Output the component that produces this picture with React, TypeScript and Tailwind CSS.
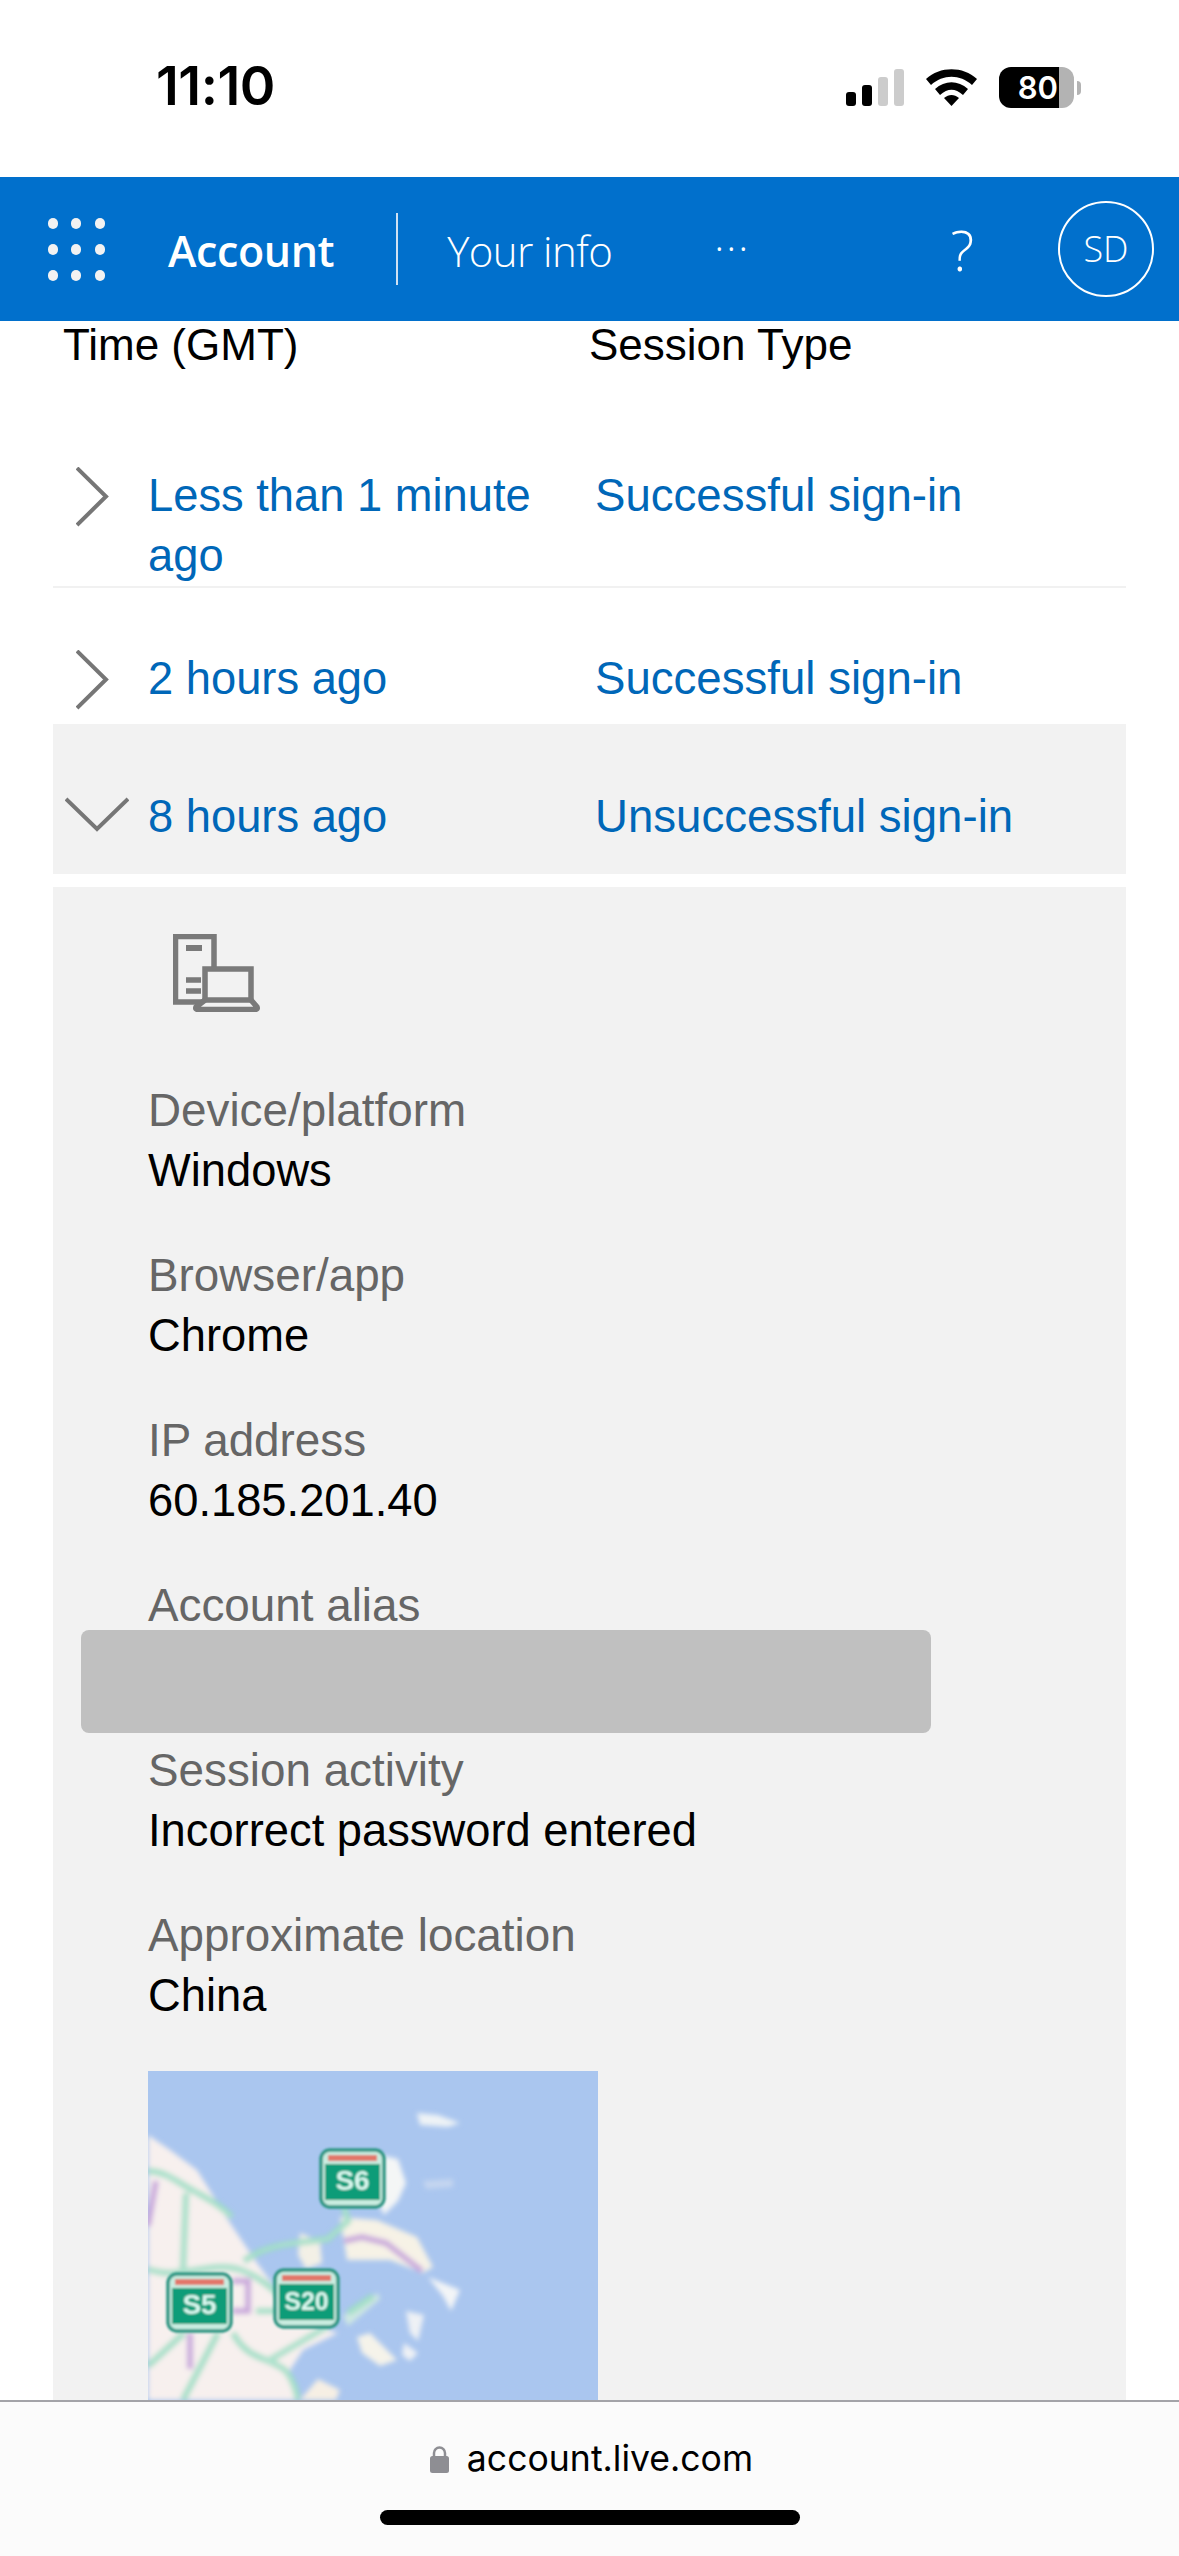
import React from "react";

type Detail = { label: string; value: string };

const details: Detail[] = [
  { label: "Device/platform", value: "Windows" },
  { label: "Browser/app", value: "Chrome" },
  { label: "IP address", value: "60.185.201.40" },
  { label: "Account alias", value: "" },
  { label: "Session activity", value: "Incorrect password entered" },
  { label: "Approximate location", value: "China" },
];

const greenRoads = [
  "M0 100 C18 100 30 112 46 120 C60 128 72 134 84 146",
  "M38 122 L35 200",
  "M0 198 C30 210 60 190 90 198 C110 204 125 218 140 232",
  "M96 190 C120 172 150 172 180 168 L200 150 L196 136",
  "M108 240 L150 240",
  "M0 295 L36 262",
  "M35 329 L70 262",
  "M85 262 C100 290 120 285 138 300 C146 310 148 320 150 329",
  "M120 290 L180 255",
  "M200 242 L225 225",
];

const purpleRoads = [
  "M8 110 L0 155",
  "M42 262 L42 298",
  "M84 210 H100 V240 H84",
  "M196 170 L214 166 L238 172 L274 200",
];

function Chevron({ open }: { open?: boolean }) {
  if (open) {
    return (
      <svg width="64" height="36" viewBox="0 0 64 36" fill="none" className="ml-[12px] mt-[10px]">
        <path d="M1 2 L32 32 L63 2" stroke="#767676" strokeWidth="4" />
      </svg>
    );
  }
  return (
    <svg width="34" height="60" viewBox="0 0 34 60" fill="none" className="ml-[23px] mt-[1px]">
      <path d="M1 1 L30 29.5 L1 58" stroke="#767676" strokeWidth="4" />
    </svg>
  );
}

function StatusIcons() {
  return (
    <div className="flex items-center">
      <svg width="58" height="37" viewBox="0 0 58 37">
        <rect x="0" y="23" width="10" height="14" rx="3" fill="#000" />
        <rect x="16" y="16" width="10" height="21" rx="3" fill="#000" />
        <rect x="32" y="8" width="10" height="29" rx="3" fill="#ccc" />
        <rect x="48" y="0" width="10" height="37" rx="3" fill="#ccc" />
      </svg>
      <svg width="51" height="37" viewBox="0 0 51 37" className="ml-[22px]">
        <path d="M0 10 C14 -3 37 -3 51 10 L46 16 C34 5 17 5 5 16 Z" fill="#000" />
        <path d="M9 20 C19 11 32 11 42 20 L37 26 C29 19 22 19 14 26 Z" fill="#000" />
        <path d="M18 29 C23 25 28 25 33 29 L25.5 37 Z" fill="#000" />
      </svg>
      <div className="ml-[22px] flex h-[41px] w-[75px] overflow-hidden rounded-[12px]">
        <div className="flex w-[60px] items-center justify-end bg-black pr-[1px] font-['Inter',sans-serif] text-[31px] font-semibold text-white">
          80
        </div>
        <div className="flex-1 bg-[#b3b3b3]" />
      </div>
      <div className="ml-[3px] h-[14px] w-[4px] rounded-r-full bg-[#b3b3b3]" />
    </div>
  );
}

function ServerLaptopIcon() {
  return (
    <svg width="87" height="78" viewBox="0 0 87 78" fill="none" stroke="#7a7a7a" strokeWidth="5.5" className="ml-[25px]">
      <path d="M29 68 H2.5 V2.5 H41 V33" />
      <path d="M13 14 H29" strokeWidth="6" />
      <path d="M13 46 H28 M13 57 H28" />
      <rect x="32" y="35" width="46" height="31" />
      <path d="M32 66 L23 73 Q22 75.5 25 75.5 H82 Q85 75.5 84 73 L78 66" />
    </svg>
  );
}

function Badge({ x, y, label, size }: { x: number; y: number; label: string; size: number }) {
  return (
    <g transform={`translate(${x} ${y})`} filter="url(#softer)">
      <rect x="1" y="1" width="63" height="57" rx="9" fill="#c9ece0" stroke="#2b9683" strokeWidth="3.5" />
      <rect x="8" y="6" width="49" height="6" fill="#e2776a" />
      <rect x="5" y="15" width="55" height="36" fill="#0c9c78" />
      <text
        x="32.5"
        y="41"
        textAnchor="middle"
        fontFamily="'Liberation Sans', sans-serif"
        fontWeight="700"
        fontSize={size}
        fill="#d9f7ee"
      >
        {label}
      </text>
    </g>
  );
}

function MapThumb() {
  return (
    <svg width="450" height="329" viewBox="0 0 450 329" className="block shrink-0">
      <defs>
        <filter id="soft" x="-10%" y="-10%" width="120%" height="120%">
          <feGaussianBlur stdDeviation="2.4" />
        </filter>
        <filter id="softer" x="-10%" y="-10%" width="120%" height="120%">
          <feGaussianBlur stdDeviation="0.8" />
        </filter>
      </defs>
      <rect width="450" height="329" fill="#aac6ef" />
      <g filter="url(#soft)">
        <path d="M0 64 L22 79 L49 99 L82 152 L109 192 L129 219 L169 256 L190 262 L155 279 L142 299 L149 329 L0 329 Z" fill="#f7f0ee" />
        <path d="M192 146 L229 149 L269 166 L285 196 L275 202 L242 189 L199 189 Z" fill="#f6f2e6" />
        <path d="M232 84 L250 88 L258 112 L250 130 L236 144 L225 120 Z" fill="#f4f6f6" />
        <path d="M269 42 L290 44 L312 52 L300 56 L272 54 Z" fill="#eef3f6" />
        <path d="M280 206 L312 219 L303 240 L295 225 Z" fill="#f3f5f7" />
        <path d="M209 266 L222 262 L249 289 L232 295 L214 282 Z" fill="#f5f3ea" />
        <path d="M258 240 L276 244 L270 270 L262 262 Z" fill="#eef1f5" />
        <path d="M256 272 L270 282 L262 290 L254 284 Z" fill="#eef1f5" />
        <path d="M152 162 L172 170 L174 192 L158 198 L150 184 Z" fill="#f3f0e6" />
        <path d="M152 329 L170 308 L192 319 L188 329 Z" fill="#f6efe4" />
        <path d="M195 245 L230 222 L232 228 L200 255 Z" fill="#cfe8e2" />
        <path d="M275 110 L305 108 L305 116 L278 118 Z" fill="#c5d6f0" />
        <g fill="none" stroke="#8fd9bd" strokeWidth="6">
          {greenRoads.map((d) => (
            <path key={d} d={d} />
          ))}
        </g>
        <g fill="none" stroke="#cdeee0" strokeWidth="1.5">
          {greenRoads.map((d) => (
            <path key={d} d={d} />
          ))}
        </g>
        <g fill="none" stroke="#c9a7dc" strokeWidth="6">
          {purpleRoads.map((d) => (
            <path key={d} d={d} />
          ))}
        </g>
      </g>
      <Badge x={172} y={78} label="S6" size={28} />
      <Badge x={19} y={202} label="S5" size={28} />
      <Badge x={126} y={198} label="S20" size={25} />
    </svg>
  );
}

export default function App() {
  return (
    <div className="flex h-[2556px] w-[1179px] flex-col overflow-hidden bg-white font-['Liberation_Sans',Arial,sans-serif] text-[45.3px] leading-[60px] text-black">
      {/* status bar */}
      <div className="flex h-[177px] shrink-0 items-start justify-between pl-[156px] pr-[98px]">
        <div className="mt-[56px] font-['Inter',sans-serif] text-[54px] font-semibold leading-[60px] tracking-[-0.5px]">11:10</div>
        <div className="mt-[67px]">
          <StatusIcons />
        </div>
      </div>

      {/* blue nav */}
      <header className="relative z-10 flex h-[144px] shrink-0 items-center bg-[#0170cc] pr-[25px] font-['Open_Sans',sans-serif] text-white">
        <div className="ml-[48px] grid w-[56px] grid-cols-3 gap-x-[14px] gap-y-[15px]">
          {Array.from({ length: 9 }).map((_, i) => (
            <div key={i} className="h-[11px] w-[10px] rounded-full bg-[#f2f2f2]" />
          ))}
        </div>
        <div className="ml-[64px] mt-[3px] text-[43px] font-semibold leading-[60px] tracking-[-0.4px]">Account</div>
        <div className="ml-[62px] h-[72px] w-[2px] bg-[#cfe1f3]" />
        <div className="ml-[49px] mt-[3px] text-[42px] font-light leading-[60px] tracking-[-0.6px]">Your info</div>
        <div className="ml-[102px] mb-[4px] text-[42px] font-light leading-[30px] tracking-[2px]">···</div>
        <div className="ml-auto text-[56px] font-light leading-[60px]">?</div>
        <div className="ml-[84px] flex h-[96px] w-[96px] items-center justify-center rounded-full border-2 border-white text-[36px] font-light leading-none">
          SD
        </div>
      </header>

      {/* sign-in activity list */}
      <main className="relative min-h-0 flex-1 overflow-hidden">
        <div className="-mt-[6px] flex h-[151px] pl-[63px] text-[44px]">
          <div className="w-[526px]">Time (GMT)</div>
          <div>Session Type</div>
        </div>

        <div className="mx-[53px]">
          <div className="grid grid-cols-[95px_447px_1fr] border-b-2 border-[#f1f1f1] text-[#0067b8]">
            <Chevron />
            <div>Less than 1 minute ago</div>
            <div className="text-[45.6px]">Successful sign-in</div>
          </div>
          <div className="grid h-[136px] grid-cols-[95px_447px_1fr] pt-[61px] text-[#0067b8]">
            <Chevron />
            <div>2 hours ago</div>
            <div className="text-[45.6px]">Successful sign-in</div>
          </div>
          <div className="grid h-[150px] grid-cols-[95px_447px_1fr] bg-[#f2f2f2] pt-[63px] text-[#0067b8]">
            <Chevron open />
            <div>8 hours ago</div>
            <div className="text-[45.6px]">Unsuccessful sign-in</div>
          </div>

          <section className="mt-[13px] h-[1600px] bg-[#f2f2f2] pl-[95px] pt-[47px]">
            <ServerLaptopIcon />
            <div className="mt-[69px] flex flex-col gap-[45px]">
              {details.map((d) => (
                <div key={d.label} className="h-[120px]">
                  <div className="text-[45.8px] text-[#666666]">{d.label}</div>
                  <div>{d.value}</div>
                </div>
              ))}
            </div>
            <div className="mt-[45px]">
              <MapThumb />
            </div>
          </section>
        </div>

        {/* redaction block over the alias value */}
        <div className="absolute left-[81px] top-[1309px] h-[103px] w-[850px] rounded-[8px] bg-[#c0c0c0]" />
      </main>

      {/* safari address bar */}
      <footer className="relative z-10 flex h-[156px] shrink-0 flex-col items-center border-t-2 border-[#a3a3a8] bg-[#fbfbfb]">
        <div className="mt-[34px] flex items-center pl-[4px] font-['Inter',sans-serif] text-[35.6px] leading-[46px]">
          <svg width="19" height="28" viewBox="0 0 19 28" className="mr-[18px]">
            <path d="M4 13 V8 a5.5 5.5 0 0 1 11 0 V13" fill="none" stroke="#8e8e93" strokeWidth="2.5" />
            <rect x="0" y="11" width="19" height="17" rx="2.5" fill="#8e8e93" />
          </svg>
          account.live.com
        </div>
        <div className="mt-[28px] h-[15px] w-[420px] rounded-full bg-black" />
      </footer>
    </div>
  );
}
